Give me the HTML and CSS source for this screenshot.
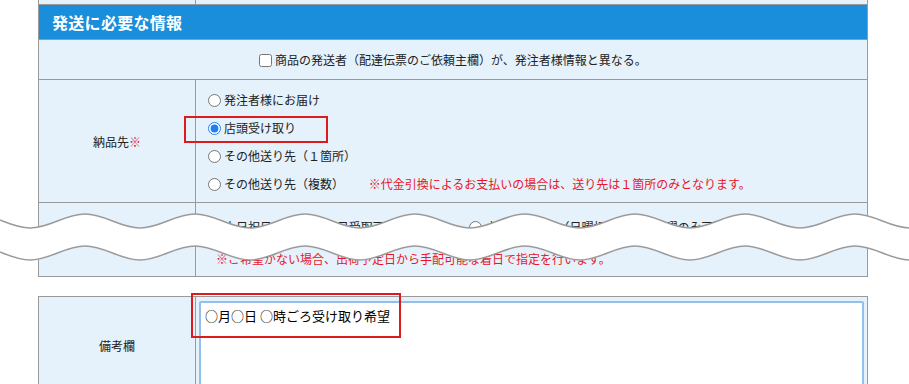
FILE: index.html
```html
<!DOCTYPE html>
<html lang="ja">
<head>
  <meta charset="UTF-8">
  <meta name="viewport" content="width=device-width, initial-scale=1.0">
  <title>発送に必要な情報</title>
  <link rel="stylesheet" href="styles.css">
</head>
<body>
  <div class="page">

    <table class="form-table">
      <tr class="prev-row">
        <th></th>
        <td></td>
      </tr>
      <tr>
        <th colspan="2" class="section-head">発送に必要な情報</th>
      </tr>
      <tr>
        <td colspan="2" class="center-cell">
          <label><input type="checkbox">商品の発送者（配達伝票のご依頼主欄）が、発注者様情報と異なる。</label>
        </td>
      </tr>
      <tr class="dest-row">
        <th>納品先<span class="req">※</span></th>
        <td class="radio-cell">
          <div class="line"><label><input type="radio" name="dest">発注者様にお届け</label></div>
          <div class="line"><label><input type="radio" name="dest" checked>店頭受け取り</label></div>
          <div class="line"><label><input type="radio" name="dest">その他送り先（１箇所）</label></div>
          <div class="line">
            <label><input type="radio" name="dest">その他送り先（複数）</label>
            <span class="note">※代金引換によるお支払いの場合は、送り先は１箇所のみとなります。</span>
          </div>
        </td>
      </tr>
      <tr class="day-row">
        <th>土日祝日の受取</th>
        <td class="radio-cell">
          <div class="line">
            <label class="opt"><input type="radio" name="day">土日祝日可</label>
            <label class="opt"><input type="radio" name="day">土日受取可能（平日）</label>
            <label class="opt"><input type="radio" name="day">土日祝日不可（日曜祝日不可・土曜のみ可）</label>
          </div>
          <div class="line note-line">
            <span class="note">※ご希望がない場合、出荷予定日から手配可能な着日で指定を行います。</span>
          </div>
        </td>
      </tr>
    </table>

    <table class="form-table memo-table">
      <tr>
        <th>備考欄</th>
        <td class="memo-cell">
          <textarea class="memo">○月○日 ○時ごろ受け取り希望</textarea>
        </td>
      </tr>
    </table>

    <!-- annotation boxes -->
    <div class="mark mark-radio"></div>
    <div class="mark mark-memo"></div>

    <!-- torn-off band -->
    <svg class="tear" width="909" height="384" viewBox="0 0 909 384">
      <path fill="#fff" d="M-80 228c20 0 35-14 55-14s35 14 55 14s35-14 55-14s35 14 55 14s35-14 55-14s35 14 55 14s35-14 55-14s35 14 55 14s35-14 55-14s35 14 55 14s35-14 55-14s35 14 55 14s35-14 55-14s35 14 55 14s35-14 55-14s35 14 55 14s35-14 55-14s35 14 55 14s35-14 55-14s35 14 55 14L1020 260c-20 0-35-14-55-14s-35 14-55 14s-35-14-55-14s-35 14-55 14s-35-14-55-14s-35 14-55 14s-35-14-55-14s-35 14-55 14s-35-14-55-14s-35 14-55 14s-35-14-55-14s-35 14-55 14s-35-14-55-14s-35 14-55 14s-35-14-55-14s-35 14-55 14s-35-14-55-14s-35 14-55 14s-35-14-55-14s-35 14-55 14Z"/>
      <path id="edge" class="edge" d="M-80 228c20 0 35-14 55-14s35 14 55 14s35-14 55-14s35 14 55 14s35-14 55-14s35 14 55 14s35-14 55-14s35 14 55 14s35-14 55-14s35 14 55 14s35-14 55-14s35 14 55 14s35-14 55-14s35 14 55 14s35-14 55-14s35 14 55 14s35-14 55-14s35 14 55 14s35-14 55-14s35 14 55 14"/>
      <use href="#edge" transform="translate(0 32)"/>
    </svg>

  </div>
</body>
</html>
```

FILE: styles.css
```css
body {
  margin: 0;
  font-family: "Noto Sans CJK JP", "Noto Sans", sans-serif;
  font-size: 12px;
  color: #222;
  background-color: #fff;
}

.page {
  position: relative;
  height: 384px;
  overflow: hidden;
}

.form-table {
  border-collapse: collapse;
  width: 830px;
  margin-left: 38px;
}

.form-table:first-child {
  margin-top: -1px;
}

.form-table th,
.form-table td {
  border: 1px solid #9a9a9a;
  background-color: #e5f1fb;
  padding: 0;
}

.form-table th {
  width: 156px;
  font-weight: normal;
  text-align: center;
}

.prev-row th,
.prev-row td {
  height: 4px;
}

.section-head {
  height: 34px;
  padding-left: 13px !important;
  text-align: left !important;
  font-size: 16px;
  font-weight: bold !important;
  color: #fff;
  background-color: #1a8edb !important;
  letter-spacing: 0.3px;
}

.center-cell {
  height: 39px;
  text-align: center;
}

.center-cell input {
  width: 13px;
  height: 13px;
  margin: 0 3px 0 0;
  vertical-align: -2px;
}

.radio-cell {
  padding-left: 12px !important;
}

.dest-row td {
  padding-top: 6px !important;
  padding-bottom: 4px !important;
}

.line {
  height: 28px;
  line-height: 28px;
  white-space: nowrap;
}

.line input {
  width: 13px;
  height: 13px;
  margin: 0 3px 0 0;
  vertical-align: -2px;
  accent-color: #1f7ff0;
}

.day-row td {
  padding-top: 10px !important;
  padding-bottom: 3px !important;
}

.opt {
  margin-right: 22px;
}

.note-line {
  margin-top: 4px;
  padding-left: 8px;
}

.note {
  color: #e8162a;
}

.dest-row .note {
  margin-left: 22px;
}

.req {
  color: #e8162a;
}

.memo-table {
  margin-top: 19px;
}

.memo-table th {
  height: 94px;
}

.memo-cell {
  padding: 4px 3px 0 3px !important;
  vertical-align: top;
}

.memo {
  display: block;
  width: 100%;
  height: 92px;
  box-sizing: border-box;
  border: 2px solid #93c0ea;
  border-radius: 2px;
  padding: 3px 4px;
  font-family: "Noto Sans CJK JP", "Noto Sans", sans-serif;
  font-size: 13px;
  line-height: 20px;
  color: #000;
  background-color: #fff;
  resize: none;
  outline: none;
}

.mark {
  position: absolute;
  box-sizing: border-box;
  border: 2px solid #dc1b1f;
}

.mark-radio {
  left: 184px;
  top: 116px;
  width: 144px;
  height: 27px;
}

.mark-memo {
  left: 191px;
  top: 293px;
  width: 210px;
  height: 45px;
}

.tear {
  position: absolute;
  left: 0;
  top: 0;
  pointer-events: none;
}

.edge {
  fill: none;
  stroke: #9b9b9b;
  stroke-width: 1.5;
}
```
